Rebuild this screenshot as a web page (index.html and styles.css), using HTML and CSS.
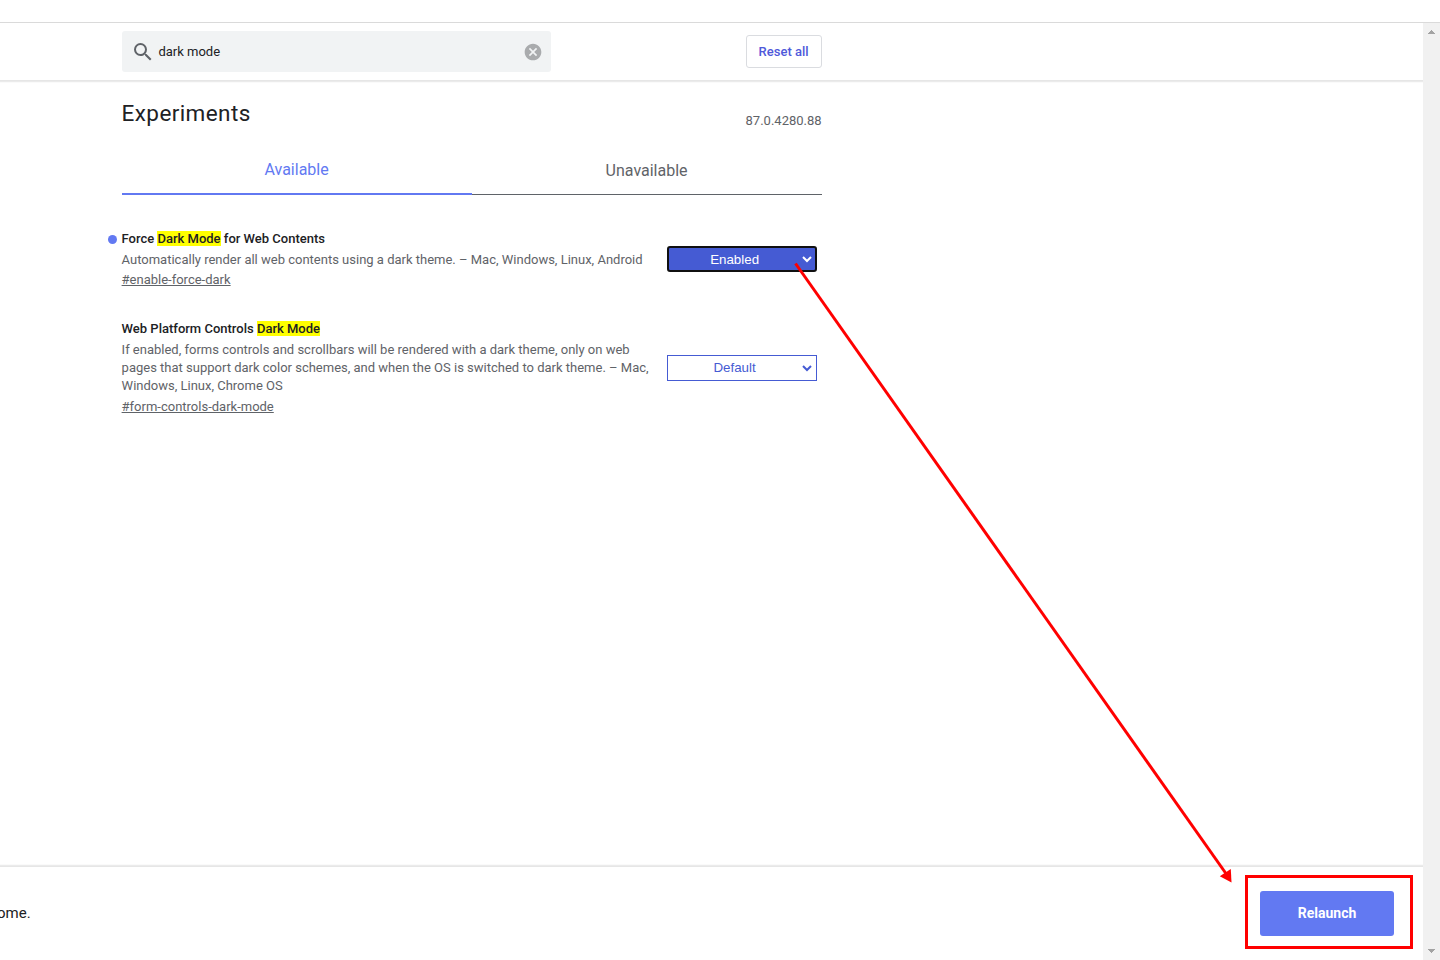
FILE: index.html
```html
<!DOCTYPE html>
<html lang="en">
<head>
  <meta charset="UTF-8" />
  <meta name="viewport" content="width=device-width, initial-scale=1.0"/>
  <title>Experiments</title>
  <link rel="stylesheet" href="styles.css">
</head>
<body>

<div class="toolbar"></div>
<div class="window">
  <div class="page">
    <header class="header">
      <div class="header-content">
        <div class="search">
          <svg class="search-icon" width="24" height="24" viewBox="0 0 24 24"><path fill="#5f6368" d="M15.5 14h-.79l-.28-.27A6.47 6.47 0 0 0 16 9.5 6.5 6.5 0 1 0 9.5 16c1.61 0 3.09-.59 4.23-1.57l.27.28v.79l5 4.99L20.49 19l-4.99-5zm-6 0C7.01 14 5 11.99 5 9.5S7.01 5 9.5 5 14 7.01 14 9.5 11.99 14 9.5 14z"/></svg>
          <input type="text" class="search-input" value="dark mode" />
          <svg class="clear-icon" width="20" height="20" viewBox="0 0 24 24"><path fill="#a9abad" d="M12 2C6.47 2 2 6.47 2 12s4.47 10 10 10 10-4.47 10-10S17.53 2 12 2zm5 13.59L15.59 17 12 13.41 8.41 17 7 15.59 10.59 12 7 8.41 8.41 7 12 10.59 15.59 7 17 8.41 13.41 12 17 15.59z"/></svg>
        </div>
        <button class="reset">Reset all</button>
      </div>
    </header>

    <main class="content">
      <div class="title-row">
        <h1>Experiments</h1>
        <span class="version">87.0.4280.88</span>
      </div>

      <div class="tabs">
        <div class="tab selected">Available</div>
        <div class="tab">Unavailable</div>
      </div>

      <div class="experiment">
        <div class="info">
          <h2><span class="dot"></span>Force <mark>Dark Mode</mark> for Web Contents</h2>
          <p>Automatically render all web contents using a dark theme. – Mac, Windows, Linux, Android</p>
          <a class="permalink" href="#enable-force-dark">#enable-force-dark</a>
        </div>
        <select class="action enabled">
          <option>Default</option>
          <option selected>Enabled</option>
          <option>Disabled</option>
        </select>
      </div>

      <div class="experiment">
        <div class="info">
          <h2>Web Platform Controls <mark>Dark Mode</mark></h2>
          <p>If enabled, forms controls and scrollbars will be rendered with a dark theme, only on web pages that support dark color schemes, and when the OS is switched to dark theme. – Mac, Windows, Linux, Chrome OS</p>
          <a class="permalink" href="#form-controls-dark-mode">#form-controls-dark-mode</a>
        </div>
        <select class="action">
          <option selected>Default</option>
          <option>Enabled</option>
          <option>Disabled</option>
        </select>
      </div>
    </main>

    <footer class="restart">
      <span class="notice">ome.</span>
      <div class="highlight"><button class="relaunch">Relaunch</button></div>
    </footer>
  </div>

  <div class="scrollbar">
    <svg width="17" height="17" viewBox="0 0 17 17" shape-rendering="crispEdges"><path fill="#a3a3a3" d="M8 7h1v1h1v1h1v1h1v1H5v-1h1V9h1V8h1z"/></svg>
    <svg width="17" height="17" viewBox="0 0 17 17" shape-rendering="crispEdges"><path fill="#a3a3a3" d="M5 6h7v1h-1v1h-1v1H9v1H8V9H7V8H6V7H5z"/></svg>
  </div>
</div>

<svg class="arrow" width="1440" height="960" viewBox="0 0 1440 960">
  <path d="M795.5 263.5L1227 875" stroke="#f00" stroke-width="3" fill="none"/>
  <path d="M1231.5 882.5L1219.8 876.2L1230.8 869Z" fill="#f00"/>
</svg>

</body>
</html>
```
FILE: styles.css
```css
* { box-sizing: border-box; }
body {
  margin: 0; height: 960px; overflow: hidden;
  display: flex; flex-direction: column;
  font-family: Roboto, sans-serif; font-size: 13px; color: #202124;
  background: #fff;
}
.toolbar { height: 23px; border-bottom: 1px solid #dadada; }
.window { flex: 1; display: flex; }
.page { flex: 1; display: flex; flex-direction: column; }

.header { height: 57px; box-shadow: 0 1px 0 #e6e6e6, 0 2px 0 #ebebeb, 0 3px 0 #fafafa; }
.header-content {
  width: 700px; margin-left: 121.6px; padding-top: 8px;
  display: flex; justify-content: space-between; align-items: flex-start;
}
.search {
  width: 429px; height: 41px; padding: 0 8px 0 9px;
  display: flex; align-items: center;
  background: #f1f3f4; border-radius: 3px;
}
.search-icon, .clear-icon { margin-left: 0.4px; }
.search-input {
  flex: 1; padding: 0; margin-left: 3.4px;
  border: none; outline: none; background: none;
  font: inherit; color: #202124;
}
.reset {
  width: 76px; height: 33px; margin-top: 4px; padding: 0;
  border: 1px solid #dadce0; border-radius: 3px; background: #fff;
  font: 500 13px Roboto, sans-serif; color: #4f59da;
}

.content { flex: 1; width: 700px; margin-left: 121.6px; padding-top: 20px; }
.title-row { display: flex; justify-content: space-between; }
h1 { margin: 0 0 2px; font-size: 22.5px; font-weight: 400; line-height: 26px; letter-spacing: 0.4px; }
.version { padding-top: 13px; line-height: 16px; color: #5f6368; }

.tabs { display: flex; margin-top: 17px; }
.tab {
  width: 350px; height: 49px; line-height: 49px;
  border-bottom: 1px solid #5f6368;
  text-align: center; font-size: 16px; color: #5f6368;
}
.tab.selected { line-height: 47px; border-bottom: 2px solid #6279f2; color: #6279f2; }

.experiment { display: flex; align-items: center; margin-top: 35px; }
.experiment + .experiment { margin-top: 30.8px; }
.info { width: 545px; padding-right: 15px; }
h2 { margin: 0; font-size: 13px; font-weight: 500; line-height: 18px; color: #202124; }
.info p { margin: 3px 0 2.3px; line-height: 18.1px; color: #5f6368; }
.permalink { display: block; line-height: 18px; color: #5f6368; }
mark { background: #ff0; color: inherit; }
.dot {
  display: inline-block; width: 9px; height: 9px; margin: 0 5px 0 -14px;
  border-radius: 50%; background: #6279f2; vertical-align: -1px;
}
.action {
  width: 150px; height: 26px; padding: 0 2px 0 0; margin-bottom: 0.5px;
  border: 2px solid #fff; outline: 1px solid #455bd3; outline-offset: -1px;
  background-color: #fff; color: #455bd3;
  font: 13.33px "Liberation Sans", sans-serif; text-align-last: center;
}
.action.enabled {
  border-color: #101010; border-radius: 3px; outline: none;
  background-color: #455bd3; color: #fff;
}

.restart {
  height: 93px; padding: 0 10px 0 0;
  display: flex; align-items: center; justify-content: space-between;
  box-shadow: 0 -1px 0 #e6e6e6, 0 -2px 0 #ebebeb, 0 -3px 0 #fafafa;
}
.notice { margin: -1px 0 0 -3px; font-size: 15px; }
.highlight { width: 168px; height: 74px; padding: 13px 12px; margin-top: -3px; border: 3px solid #f00; }
.relaunch {
  width: 134px; height: 45px; padding: 0 0 2px; border: none; border-radius: 3px;
  background: #6279f2; color: #fff; font: 700 14px Roboto, sans-serif;
}

.scrollbar {
  width: 17px; background: #f1f1f1;
  display: flex; flex-direction: column; justify-content: space-between;
}
.arrow { position: absolute; top: 0; left: 0; pointer-events: none; }
```
